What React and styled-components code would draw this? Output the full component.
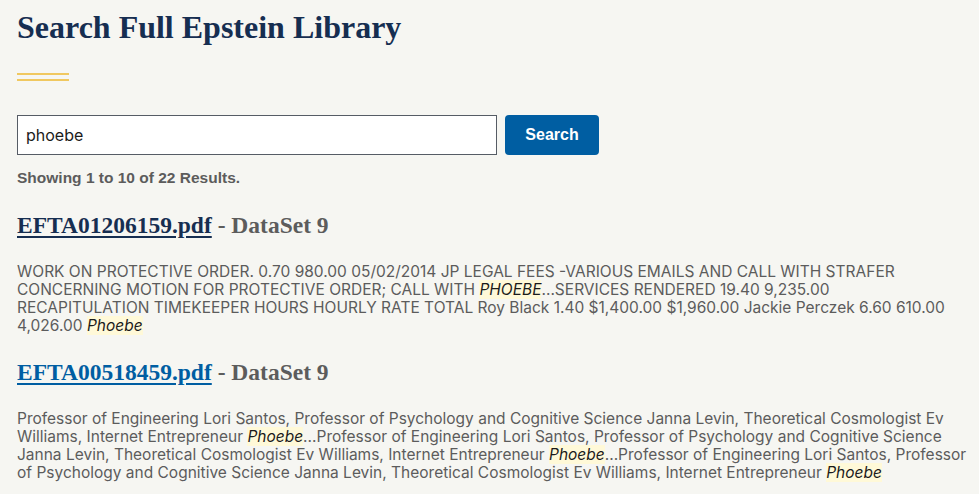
import styled, { createGlobalStyle } from "styled-components";

const GlobalStyle = createGlobalStyle`
  html, body {
    margin: 0;
    padding: 0;
    background: #f6f6f2;
  }
  body {
    font-family: Inter, "Liberation Sans", Arial, sans-serif;
    color: #5c5c5c;
  }
`;

const Page = styled.main`
  padding: 7px 8px 0 17px;
  background: #f6f6f2;
  min-height: 494px;
  box-sizing: border-box;
`;

const Title = styled.h1`
  font-family: "Liberation Serif", "Times New Roman", serif;
  font-weight: 700;
  font-size: 32px;
  line-height: 40px;
  color: #162e51;
  margin: 0;
`;

const Rule = styled.div`
  width: 52px;
  height: 8px;
  margin: 26px 0 34px;
  border-top: 2px solid #f0c860;
  border-bottom: 2px solid #f0c860;
  box-sizing: border-box;
`;

const SearchForm = styled.form`
  display: flex;
  gap: 8px;
  align-items: stretch;
`;

const SearchInput = styled.input`
  width: 480px;
  height: 40px;
  box-sizing: border-box;
  border: 1px solid #565c65;
  background: #fff;
  padding: 0 8px;
  font-family: Inter, "Liberation Sans", Arial, sans-serif;
  font-size: 16px;
  color: #1b1b1b;
  outline: none;
`;

const SearchButton = styled.button`
  width: 94px;
  height: 40px;
  border: none;
  border-radius: 4px;
  background: #005ea2;
  color: #fff;
  font-family: "Liberation Sans", Arial, sans-serif;
  font-weight: 700;
  font-size: 16px;
  cursor: pointer;
`;

const Summary = styled.p`
  margin: 13px 0 0;
  font-family: "Liberation Sans", Arial, sans-serif;
  font-size: 15.5px;
  line-height: 20px;
  font-weight: 700;
  color: #5c5c5c;
`;

const Result = styled.section`
  margin-top: 23px;
`;

const ResultTitle = styled.h2`
  margin: 0;
  font-family: "Liberation Serif", "Times New Roman", serif;
  font-weight: 700;
  font-size: 23.5px;
  line-height: 28px;
  color: #5c5c5c;
`;

const FileLink = styled.a`
  color: ${(p) => (p.$visited ? "#162e51" : "#005ea2")};
  text-decoration: underline;
  text-decoration-thickness: 2px;
  text-underline-offset: 3px;
`;

const Snippet = styled.p`
  margin: 24px 0 0;
  font-size: 15.5px;
  line-height: 18px;
  color: #5c5c5c;
`;

const Mark = styled.em`
  background: #fff9d8;
  color: #1b1b1b;
  font-style: italic;
`;

const results = [
  {
    file: "EFTA01206159.pdf",
    set: "DataSet 9",
    visited: true,
    parts: [
      "WORK ON PROTECTIVE ORDER. 0.70 980.00 05/02/2014 JP LEGAL FEES -VARIOUS EMAILS AND CALL WITH STRAFER CONCERNING MOTION FOR PROTECTIVE ORDER; CALL WITH ",
      { hl: "PHOEBE" },
      "...SERVICES RENDERED 19.40 9,235.00",
      { br: true },
      "RECAPITULATION TIMEKEEPER HOURS HOURLY RATE TOTAL Roy Black 1.40 $1,400.00 $1,960.00 Jackie Perczek 6.60 610.00 4,026.00 ",
      { hl: "Phoebe" },
    ],
  },
  {
    file: "EFTA00518459.pdf",
    set: "DataSet 9",
    visited: false,
    parts: [
      "Professor of Engineering Lori Santos, Professor of Psychology and Cognitive Science Janna Levin, Theoretical Cosmologist Ev Williams, Internet Entrepreneur ",
      { hl: "Phoebe" },
      "...Professor of Engineering Lori Santos, Professor of Psychology and Cognitive Science Janna Levin, Theoretical Cosmologist Ev Williams, Internet Entrepreneur ",
      { hl: "Phoebe" },
      "...Professor of Engineering Lori Santos, Professor of Psychology and Cognitive Science Janna Levin, Theoretical Cosmologist Ev Williams, Internet Entrepreneur ",
      { hl: "Phoebe" },
    ],
  },
];

const renderPart = (p, i) => {
  if (typeof p === "string") return p;
  if (p.br) return <br key={i} />;
  return <Mark key={i}>{p.hl}</Mark>;
};

export default function App() {
  return (
    <>
      <GlobalStyle />
      <Page>
        <Title>Search Full Epstein Library</Title>
        <Rule />
        <SearchForm onSubmit={(e) => e.preventDefault()}>
          <SearchInput defaultValue="phoebe" />
          <SearchButton type="submit">Search</SearchButton>
        </SearchForm>
        <Summary>Showing 1 to 10 of 22 Results.</Summary>
        {results.map((r) => (
          <Result key={r.file}>
            <ResultTitle>
              <FileLink href="#" $visited={r.visited}>
                {r.file}
              </FileLink>{" "}
              - {r.set}
            </ResultTitle>
            <Snippet>{r.parts.map(renderPart)}</Snippet>
          </Result>
        ))}
      </Page>
    </>
  );
}
